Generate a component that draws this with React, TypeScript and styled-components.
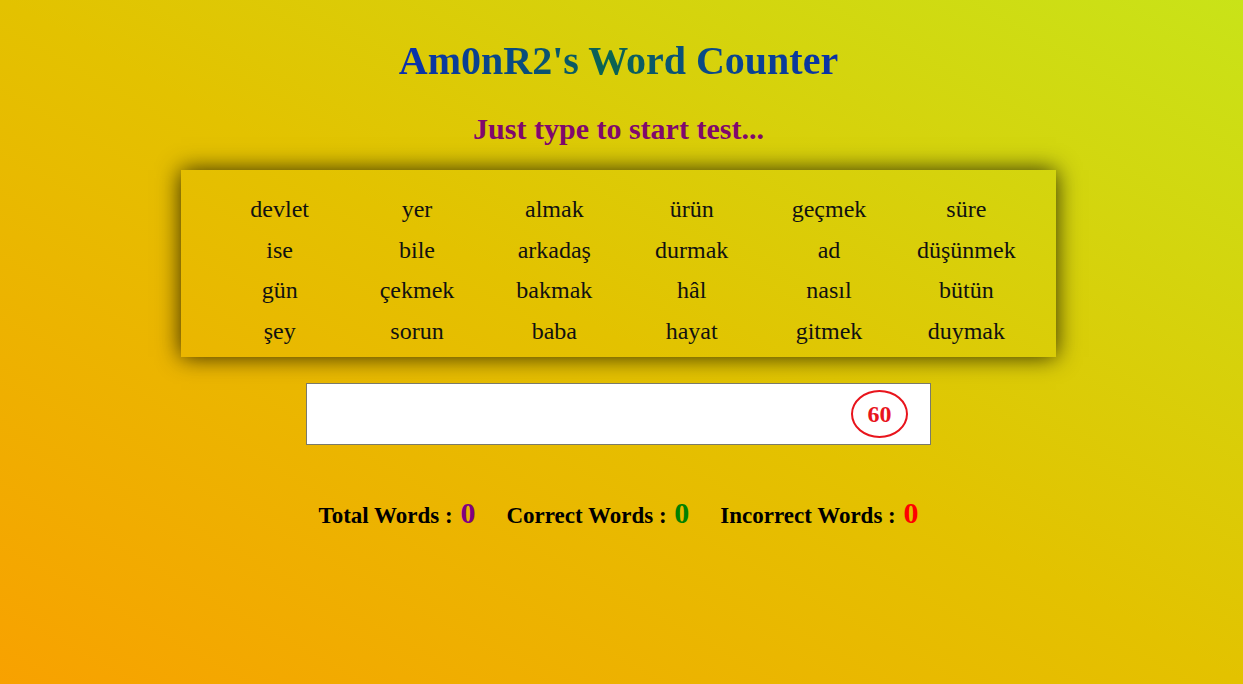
import styled, { createGlobalStyle } from 'styled-components'

const GlobalStyle = createGlobalStyle`
  html, body {
    margin: 0;
    padding: 0;
  }
  body {
    font-family: 'Liberation Serif', 'Times New Roman', serif;
    background: linear-gradient(to top right, #f8a100 0%, #e3c200 50%, #c9e318 100%);
    min-height: 100vh;
  }
`

const Page = styled.div`
  min-height: 100vh;
  display: flex;
  flex-direction: column;
  align-items: center;
  padding: 37px 6px 0 0;
  box-sizing: border-box;
`

const Title = styled.h1`
  margin: 0;
  font-size: 40px;
  line-height: 48px;
  font-weight: bold;
  background: linear-gradient(to right, #0a2fb0 0%, #0a4f78 30%, #0b6450 48%, #0a4a88 70%, #0a32a8 100%);
  -webkit-background-clip: text;
  background-clip: text;
  color: transparent;
`

const Subtitle = styled.h2`
  margin: 26px 0 0;
  font-size: 30px;
  line-height: 36px;
  font-weight: bold;
  color: #80086e;
`

const WordBox = styled.div`
  margin-top: 23px;
  width: 875px;
  height: 187px;
  box-sizing: border-box;
  padding: 19px 21px 0 30px;
  box-shadow: 0 0 22px rgba(0, 0, 0, 0.78);
  display: grid;
  grid-template-columns: repeat(6, 1fr);
  grid-auto-rows: 40.6px;
`

const Word = styled.span`
  font-size: 24px;
  line-height: 40.6px;
  text-align: center;
  color: #111;
`

const InputWrap = styled.div`
  margin-top: 26px;
  width: 625px;
  height: 62px;
  box-sizing: border-box;
  border: 1px solid #7a7a6a;
  background: #fff;
  display: flex;
  align-items: center;
  padding-right: 22px;
`

const TypeInput = styled.input`
  flex: 1;
  height: 100%;
  border: none;
  outline: none;
  background: transparent;
  font-family: inherit;
  font-size: 24px;
  padding: 0 16px;
`

const Timer = styled.div`
  width: 57px;
  height: 48px;
  box-sizing: border-box;
  border: 2px solid #e8141c;
  border-radius: 50%;
  display: flex;
  align-items: center;
  justify-content: center;
  color: #e8141c;
  font-weight: bold;
  font-size: 24px;
`

const Stats = styled.div`
  margin-top: 50px;
  display: flex;
  gap: 31px;
  align-items: baseline;
`

const Stat = styled.div`
  display: flex;
  align-items: baseline;
  font-weight: bold;
  font-size: 23px;
  line-height: 36px;
  color: #000;
  white-space: pre;
`

const Count = styled.span<{ $color: string }>`
  margin-left: 2px;
  font-size: 30px;
  font-weight: bold;
  color: ${(p) => p.$color};
`

const words = [
  'devlet', 'yer', 'almak', 'ürün', 'geçmek', 'süre',
  'ise', 'bile', 'arkadaş', 'durmak', 'ad', 'düşünmek',
  'gün', 'çekmek', 'bakmak', 'hâl', 'nasıl', 'bütün',
  'şey', 'sorun', 'baba', 'hayat', 'gitmek', 'duymak',
]

const stats = [
  { label: 'Total Words : ', value: 0, color: '#800080' },
  { label: 'Correct Words : ', value: 0, color: '#008000' },
  { label: 'Incorrect Words : ', value: 0, color: '#ff0000' },
]

const App = () => {
  return (
    <>
      <GlobalStyle />
      <Page>
        <Title>Am0nR2's Word Counter</Title>
        <Subtitle>Just type to start test...</Subtitle>
        <WordBox>
          {words.map((w, i) => (
            <Word key={i}>{w}</Word>
          ))}
        </WordBox>
        <InputWrap>
          <TypeInput type="text" />
          <Timer>60</Timer>
        </InputWrap>
        <Stats>
          {stats.map((s) => (
            <Stat key={s.label}>
              {s.label}
              <Count $color={s.color}>{s.value}</Count>
            </Stat>
          ))}
        </Stats>
      </Page>
    </>
  )
}

export default App
